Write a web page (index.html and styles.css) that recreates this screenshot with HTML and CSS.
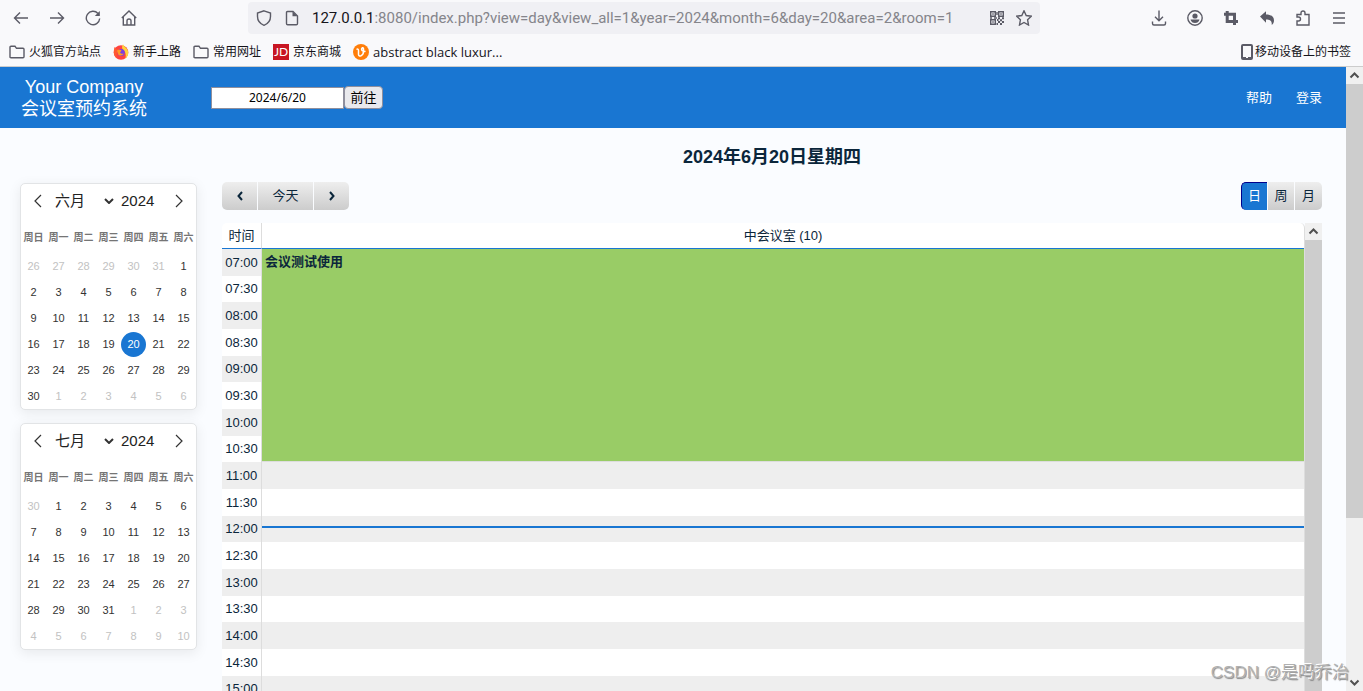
FILE: index.html
```html
<!DOCTYPE html>
<html lang="zh-CN">
<head>
<meta charset="utf-8">
<title>会议室预约系统</title>
<link rel="stylesheet" href="styles.css">
</head>
<body>
<header class="browser">
  <div class="toolbar">
    <nav class="history">
      <button class="tool" aria-label="后退"><svg viewBox="0 0 16 16"><path d="M15 8H1.5M7 2.500 1.500 8 7 13.500"/></svg></button>
      <button class="tool" aria-label="前进"><svg viewBox="0 0 16 16"><path d="M1 8h13.500M9 2.500 14.500 8 9 13.500"/></svg></button>
      <button class="tool" aria-label="刷新"><svg viewBox="0 0 16 16"><path d="M13 3.500A6.700 6.700 0 1 0 14.700 8.500"/><path class="solid" d="M14.800 1v5H9.800z"/></svg></button>
      <button class="tool" aria-label="主页"><svg viewBox="0 0 16 16"><path d="M.8 8 8 1l7.200 7M2.300 7v8h11.400V7M6 15v-4.200Q6 9 8 9t2 1.800V15"/></svg></button>
    </nav>
    <div class="address">
      <svg class="icon" viewBox="0 0 16 16"><path d="M8 .8 14.500 3v3.500c0 4-2 7-6.500 8.800C3.500 13.500 1.500 10.500 1.500 6.500V3z"/></svg>
      <svg class="icon" viewBox="0 0 16 16"><path d="M3.500 1.500h5.500l4.500 4.500v7.500q0 1.200-1.200 1.200H3.700q-1.200 0-1.200-1.200v-11q0-1 1-1z"/><path class="solid" d="M8.500 1.500v4.800h5z"/></svg>
      <div class="url"><b>127.0.0.1</b>:8080/index.php?view=day&amp;view_all=1&amp;year=2024&amp;month=6&amp;day=20&amp;area=2&amp;room=1</div>
      <svg class="icon qr" viewBox="0 0 14 14"><path d="M.7.7h4.600v4.600H.7zM8.700.7h4.600v4.600H8.700zM.7 8.700h4.600v4.600H.7z"/><path class="solid" d="M2.300 2.300h1.400v1.400H2.300zM10.300 2.300h1.400v1.400h-1.400zM2.300 10.300h1.400v1.400H2.300zM0 6.300h2v1.400H0zM4 6.300h3v1.400H4zM6.300 1h1.400v3H6.300zM8 6.300h2v2H8zM12 6.300h2v2h-2zM7 8h1.500v2H7zM10 8.300h2v2h-2zM8 10h2v2H8zM12 10h2v2h-2zM6.500 12H8v2H6.500zM10 12h2v2h-2z"/></svg>
      <svg class="icon" viewBox="0 0 16 16"><path d="m8 .8 2.200 4.700 5.100.7-3.700 3.600.9 5.200L8 12.500 3.500 15l.9-5.200L.7 6.200l5.100-.7z"/></svg>
    </div>
    <nav class="actions">
      <button class="tool" aria-label="下载"><svg viewBox="0 0 16 16"><path d="M8 .5v10M4 6.800l4 4 4-4M1.500 11.500v2q0 1.500 1.500 1.500h10q1.500 0 1.500-1.500v-2"/></svg></button>
      <button class="tool" aria-label="账户"><svg viewBox="0 0 16 16"><circle cx="8" cy="8" r="7.200"/><circle class="solid" cx="8" cy="6" r="2.600"/><path class="solid" d="M3.500 9.500h9Q11.500 13 8 13T3.500 9.500z"/></svg></button>
      <button class="tool" aria-label="裁剪"><svg viewBox="0 0 16 16"><path class="thick" d="M1 4.200h10.500V15M4.200 1v10.500H15"/></svg></button>
      <button class="tool" aria-label="撤销"><svg viewBox="0 0 16 16"><path class="solid" d="M1 6.500 7 1.300v3.200c5 0 8 2.300 8 6 0 2-1 3.500-2.300 4.500.5-4-1.700-5.500-5.700-5.500v3.200z"/></svg></button>
      <button class="tool" aria-label="扩展"><svg viewBox="0 0 16 16"><path d="M2 15V11h1.500a2 2 0 0 0 0-4H2V4.500h4V3a2 2 0 0 1 4 0v1.500h4V15z"/></svg></button>
      <button class="tool" aria-label="菜单"><svg viewBox="0 0 16 16"><path d="M2 3h12M2 8h12M2 13h12"/></svg></button>
    </nav>
  </div>
  <nav class="bookmarks">
    <a href="#"><svg class="icon" viewBox="0 0 16 16"><path d="M1 13.500V3.300q0-1 1-1h4l1.500 2H14q1 0 1 1v7.400q0 1-1 1H2q-1 0-1-1z"/></svg>火狐官方站点</a>
    <a href="#"><svg class="logo" viewBox="0 0 16 16"><circle cx="8" cy="8.500" r="7.300" fill="#ff4340"/><path d="M10 .3c.5 2 2.200 2.500 3.800 4.500 2.500 3.300 1.700 7.700-1.500 9.700 1-3 .4-7-2.300-8.500-1.500-2-1-4 0-5.700z" fill="#ffd23b"/><path d="M1.300 3 3.500 5.500 6 4.700l2.500 1L4 9Q2 13 6 15 1 13.500.8 8.500z" fill="#ff5a30"/><circle cx="8.300" cy="8.500" r="3.500" fill="#7a3fe0"/><path d="M4 6.500q3-1.500 4.500 0L7 8.500q1 2 4 1-2 3-5.500 1.500z" fill="#ff9a26"/></svg>新手上路</a>
    <a href="#"><svg class="icon" viewBox="0 0 16 16"><path d="M1 13.500V3.300q0-1 1-1h4l1.500 2H14q1 0 1 1v7.400q0 1-1 1H2q-1 0-1-1z"/></svg>常用网址</a>
    <a href="#"><span class="jd">JD</span>京东商城</a>
    <a href="#"><svg class="logo" viewBox="0 0 16 16"><circle cx="8" cy="8" r="8" fill="#ff7e0a"/><path d="M3.500 5.500q1.800-1.300 2 1v4q.2 2 2.500 1.200 2.500-1.200 2.500-4.500V5q0-1.500-1-1.200Q8 4.500 9 6.500q1.200 1.300 3.500.7" fill="none" stroke="#fff" stroke-width="1.500"/></svg><span class="latin">abstract black luxur...</span></a>
    <a class="mobile" href="#"><svg class="phone" viewBox="0 0 12 16"><rect x="1" y="1" width="10" height="14" rx="1"/><path class="solid" d="M1 13h10v2H1z"/><path d="M5 13.500h2" stroke="#fff" stroke-width="1"/></svg>移动设备上的书签</a>
  </nav>
</header>

<div class="viewport">
  <div class="page">
    <header class="banner">
      <div class="brand"><span>Your Company</span><a href="#">会议室预约系统</a></div>
      <form class="goto"><input type="text" value="2024/6/20" aria-label="日期"><button type="button">前往</button></form>
      <nav class="links"><a href="#">帮助</a><a href="#">登录</a></nav>
    </header>
    <div class="contents">
      <aside class="minicals">
        <section class="minical">
          <div class="month">
            <button aria-label="上个月"><svg viewBox="0 0 8 14"><path d="M7 1 1 7l6 6"/></svg></button>
            <span class="pick"><select aria-label="月份"><option>六月</option></select><svg viewBox="0 0 10 6"><path d="m1 1 4 4 4-4"/></svg></span>
            <input type="text" value="2024" aria-label="年份">
            <button aria-label="下个月"><svg viewBox="0 0 8 14"><path d="m1 1 6 6-6 6"/></svg></button>
          </div>
          <table>
            <thead><tr><th>周日</th><th>周一</th><th>周二</th><th>周三</th><th>周四</th><th>周五</th><th>周六</th></tr></thead>
            <tbody>
              <tr><td class="other">26</td><td class="other">27</td><td class="other">28</td><td class="other">29</td><td class="other">30</td><td class="other">31</td><td>1</td></tr>
              <tr><td>2</td><td>3</td><td>4</td><td>5</td><td>6</td><td>7</td><td>8</td></tr>
              <tr><td>9</td><td>10</td><td>11</td><td>12</td><td>13</td><td>14</td><td>15</td></tr>
              <tr><td>16</td><td>17</td><td>18</td><td>19</td><td><span class="selected">20</span></td><td>21</td><td>22</td></tr>
              <tr><td>23</td><td>24</td><td>25</td><td>26</td><td>27</td><td>28</td><td>29</td></tr>
              <tr><td>30</td><td class="other">1</td><td class="other">2</td><td class="other">3</td><td class="other">4</td><td class="other">5</td><td class="other">6</td></tr>
            </tbody>
          </table>
        </section>
        <section class="minical">
          <div class="month">
            <button aria-label="上个月"><svg viewBox="0 0 8 14"><path d="M7 1 1 7l6 6"/></svg></button>
            <span class="pick"><select aria-label="月份"><option>七月</option></select><svg viewBox="0 0 10 6"><path d="m1 1 4 4 4-4"/></svg></span>
            <input type="text" value="2024" aria-label="年份">
            <button aria-label="下个月"><svg viewBox="0 0 8 14"><path d="m1 1 6 6-6 6"/></svg></button>
          </div>
          <table>
            <thead><tr><th>周日</th><th>周一</th><th>周二</th><th>周三</th><th>周四</th><th>周五</th><th>周六</th></tr></thead>
            <tbody>
              <tr><td class="other">30</td><td>1</td><td>2</td><td>3</td><td>4</td><td>5</td><td>6</td></tr>
              <tr><td>7</td><td>8</td><td>9</td><td>10</td><td>11</td><td>12</td><td>13</td></tr>
              <tr><td>14</td><td>15</td><td>16</td><td>17</td><td>18</td><td>19</td><td>20</td></tr>
              <tr><td>21</td><td>22</td><td>23</td><td>24</td><td>25</td><td>26</td><td>27</td></tr>
              <tr><td>28</td><td>29</td><td>30</td><td>31</td><td class="other">1</td><td class="other">2</td><td class="other">3</td></tr>
              <tr><td class="other">4</td><td class="other">5</td><td class="other">6</td><td class="other">7</td><td class="other">8</td><td class="other">9</td><td class="other">10</td></tr>
            </tbody>
          </table>
        </section>
      </aside>
      <main class="dayview">
        <h2>2024年6月20日星期四</h2>
        <div class="controls">
          <nav class="group arrows"><a href="#" aria-label="前一天"><svg viewBox="0 0 6 10"><path d="M5 1 1.500 5 5 9"/></svg></a><a class="today" href="#">今天</a><a href="#" aria-label="后一天"><svg viewBox="0 0 6 10"><path d="m1 1 3.500 4L1 9"/></svg></a></nav>
          <nav class="group views"><a class="current" href="#">日</a><a href="#">周</a><a href="#">月</a></nav>
        </div>
        <div class="schedule">
          <table>
            <thead><tr><th class="time">时间</th><th>中会议室 (10)</th></tr></thead>
            <tbody>
              <tr><th>07:00</th><td class="event" rowspan="8"><a href="#">会议测试使用</a></td></tr>
              <tr><th>07:30</th></tr>
              <tr><th>08:00</th></tr>
              <tr><th>08:30</th></tr>
              <tr><th>09:00</th></tr>
              <tr><th>09:30</th></tr>
              <tr><th>10:00</th></tr>
              <tr><th>10:30</th></tr>
              <tr><th>11:00</th><td></td></tr>
              <tr><th>11:30</th><td></td></tr>
              <tr><th>12:00</th><td class="now"></td></tr>
              <tr><th>12:30</th><td></td></tr>
              <tr><th>13:00</th><td></td></tr>
              <tr><th>13:30</th><td></td></tr>
              <tr><th>14:00</th><td></td></tr>
              <tr><th>14:30</th><td></td></tr>
              <tr><th>15:00</th><td></td></tr>
            </tbody>
          </table>
          <div class="scrollbar"><svg viewBox="0 0 17 17"><path d="m4.500 10.500 4-4 4 4"/></svg><div class="thumb"></div></div>
        </div>
      </main>
    </div>
  </div>
  <div class="scrollbar outer"><svg viewBox="0 0 17 17"><path d="m4.500 10.500 4-4 4 4"/></svg><div class="thumb"></div><svg viewBox="0 0 17 17"><path d="m4.500 6.500 4 4 4-4"/></svg></div>
</div>
<div class="watermark">CSDN @是吗乔治</div>
</body>
</html>
```
FILE: styles.css
```css
* { box-sizing: border-box; }

body {
  margin: 0;
  height: 100vh;
  display: flex;
  flex-direction: column;
  overflow: hidden;
  position: relative;
  background: #fafcff;
  color: #0b263b;
  font: 13px/20px "Liberation Sans", "Noto Sans CJK SC", sans-serif;
}

a { color: inherit; text-decoration: none; }
button, input, select { font: inherit; color: inherit; padding: 0; margin: 0; }
svg { display: block; flex: none; fill: none; stroke: #5b5b66; stroke-width: 1.4; }
svg .solid { fill: #5b5b66; stroke: none; }
svg .thick { stroke-width: 3; }
table { border-collapse: collapse; }

/* Browser bars */
.browser {
  flex: none;
  background: #f9f9fb;
  border-bottom: 1px solid #ccc;
  color: #15141a;
}
.toolbar { display: flex; align-items: center; height: 36px; padding: 0 16px 0 13px; }
.history, .actions { display: flex; gap: 20px; }
.actions { margin-left: auto; }
.tool { border: 0; background: none; width: 16px; height: 16px; }
.tool svg { width: 16px; height: 16px; }
.address {
  flex: 0 1 792px;
  min-width: 0;
  display: flex;
  align-items: center;
  gap: 12px;
  height: 32px;
  margin: 0 24px 0 111px;
  padding: 0 8px;
  border-radius: 4px;
  background: #f0f0f4;
}
.icon { width: 16px; height: 16px; }
.icon.qr { width: 14px; height: 14px; }
.url {
  flex: 1;
  min-width: 0;
  overflow: hidden;
  white-space: nowrap;
  color: #85858b;
  font: 15px/24px Roboto, sans-serif;
}
.url b { font-weight: 400; color: #15141a; }
.bookmarks {
  display: flex;
  align-items: center;
  gap: 12px;
  height: 30px;
  padding: 2px 12px 0 9px;
  font-size: 12px;
}
.bookmarks a { display: flex; align-items: center; gap: 4px; white-space: nowrap; }
.bookmarks .mobile { margin-left: auto; gap: 2px; }
.logo { width: 16px; height: 16px; stroke: none; }
.phone { width: 12px; height: 16px; stroke-width: 2; }
.jd { width: 16px; background: #c81623; color: #fff; font: 12px/16px Lato, sans-serif; text-align: center; }
.latin { font: 13px/20px "Open Sans", sans-serif; }

/* Page */
.viewport { flex: 1; min-height: 0; display: flex; }
.page { flex: 1; min-width: 0; overflow: hidden; }
.banner {
  display: flex;
  align-items: center;
  height: 61px;
  padding: 0 24px 0 21px;
  background: #1976d2;
  color: #fff;
}
.brand { display: flex; flex-direction: column; align-items: center; font-size: 18px; line-height: 22px; }
.goto { display: flex; align-items: center; margin-left: 64px; }
.goto input {
  width: 133px;
  height: 22px;
  border: 1px solid #8f8f9d;
  color: #000;
  font: 12px/20px "Noto Sans", sans-serif;
  text-align: center;
}
.goto button { width: 39px; height: 23px; border: 1px solid #8f8f9d; border-radius: 4px; background: #e9e9ed; color: #000; line-height: 20px; }
.links { display: flex; gap: 24px; margin-left: auto; }

.contents { display: flex; gap: 25px; padding: 0 24px 0 20px; }
.minicals { flex: none; display: flex; flex-direction: column; gap: 13px; padding-top: 55px; }
.minical {
  width: 177px;
  border: 1px solid #e2e4e6;
  border-radius: 5px;
  background: #fff;
  box-shadow: 0 3px 13px rgba(0, 0, 0, .08);
}
.month { display: flex; align-items: center; height: 34px; padding: 0 13px; color: #222; font-size: 15px; }
.month button { border: 0; background: none; width: 8px; height: 14px; }
.month svg { width: 8px; height: 14px; stroke: #333; stroke-width: 1.2; }
.pick { display: flex; align-items: center; width: 59px; margin-left: 13px; }
.pick select { appearance: none; border: 0; background: none; width: 49px; }
.month .pick svg { width: 10px; height: 6px; stroke-width: 2; }
.month input { width: 36px; margin-left: 7px; border: 0; background: none; }
.month button:last-child { margin-left: auto; }
.minical table { width: 175px; table-layout: fixed; margin-top: 4px; font-size: 11px; text-align: center; }
.minical th { height: 31px; padding: 0; color: #757575; font-size: 10px; white-space: nowrap; }
.minical td { height: 26px; padding: 0; color: #333; }
.minical .other { color: #c2c2c2; }
.selected { display: block; height: 25px; border-radius: 50%; background: #1976d2; color: #fff; line-height: 25px; }

.dayview { flex: 1; min-width: 0; }
h2 { margin: 0; padding: 17px 0 13px; font-size: 18px; line-height: 24px; text-align: center; }
.controls { display: flex; justify-content: space-between; }
.group { display: flex; gap: 1px; }
.group a {
  display: flex;
  align-items: center;
  justify-content: center;
  width: 35px;
  height: 28px;
  padding-bottom: 1px;
  background: linear-gradient(#eee, #ccc);
}
.group a:first-child { border-radius: 5px 0 0 5px; }
.group a:last-child { border-radius: 0 5px 5px 0; }
.group .today { width: 55px; }
.views a { width: 27px; }
.views a:first-child, .views a:nth-child(2) { width: 26px; }
.views .current { background: #1976d2; color: #fff; border: solid #00008b; border-width: 1px 0 0 1px; }
.group svg { width: 6px; height: 10px; stroke: #0b263b; stroke-width: 2; }

.schedule { display: flex; margin-top: 13px; }
.schedule table { flex: 1; border-collapse: separate; border-spacing: 0; background: #fff; border-right: 1px solid #ddd; border-radius: 5px 5px 0 0; }
.schedule th { padding: 0; font-weight: 400; }
.schedule thead th { height: 26px; border-bottom: 1px solid #1976d2; }
.schedule .time, .schedule tbody th { width: 40px; border-right: 1px solid #ddd; }
.schedule tbody tr { height: 27px; }
.schedule tbody tr:nth-child(3n+2) { height: 26px; }
.schedule tbody tr:nth-child(odd) { background: #eee; }
.schedule td { padding: 0; }
.schedule .event { padding: 3px; background: #9c6; border-bottom: 1px solid #ddd; font-weight: 700; vertical-align: top; }
.now { position: relative; }
.now::after { content: ""; position: absolute; left: 0; right: 0; top: 10px; height: 2px; background: #1976d2; }

.scrollbar { flex: none; display: flex; flex-direction: column; width: 17px; background: #f0f0f0; }
.scrollbar svg { width: 17px; height: 17px; stroke: #505050; stroke-width: 2; }
.thumb { flex: 1; background: #cdcdcd; }
.outer .thumb { flex: 0 1 434px; }
.outer svg:last-child { margin-top: auto; }

.watermark {
  position: absolute;
  right: 14px;
  bottom: 6px;
  color: #b0b0b0;
  font-size: 17px;
  line-height: 24px;
  text-shadow: -1px -1px 0 #fff, 1px 1px 1px #888;
}
```
